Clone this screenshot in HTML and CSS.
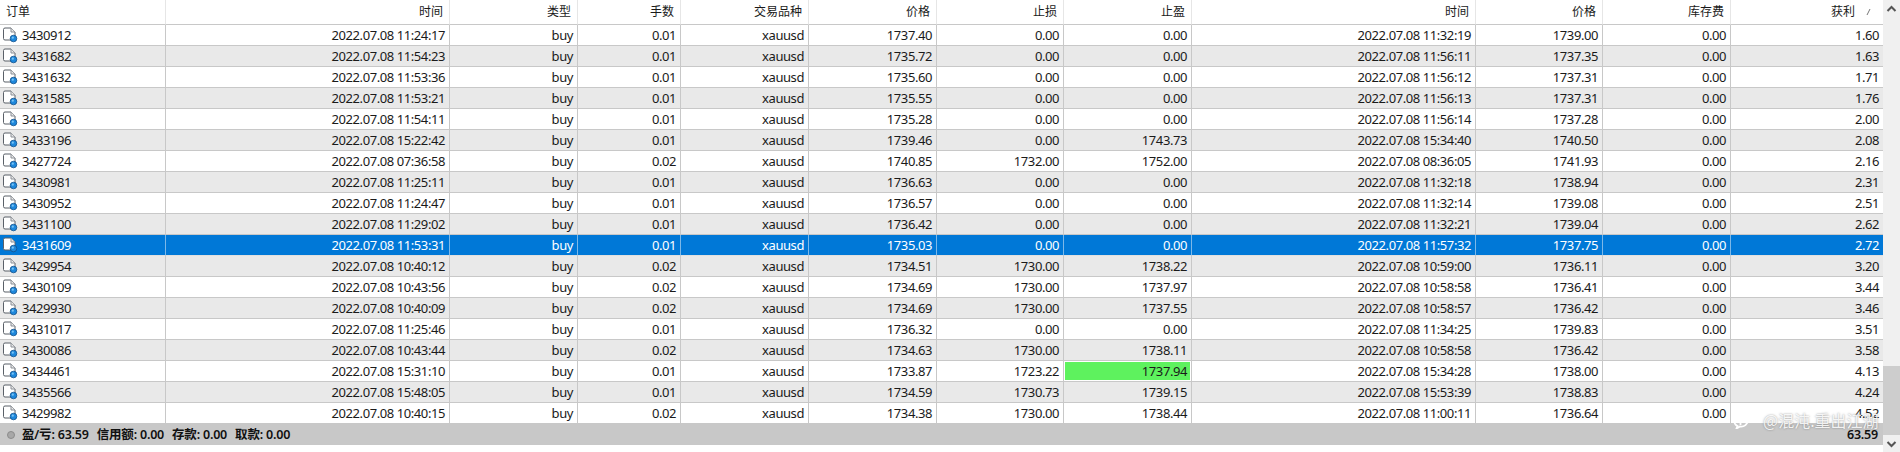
FILE: index.html
```html
<!DOCTYPE html>
<html lang="zh-CN">
<head>
<meta charset="utf-8">
<title>账户历史</title>
<link rel="stylesheet" href="styles.css">
</head>
<body>
<svg class="defs" width="0" height="0" aria-hidden="true">
  <symbol id="doc" viewBox="0 0 16 16">
    <path d="M.5 2.500q0-1.500 1.500-1.500H8l4 4v8H2q-1.500 0-1.500-1.500z" fill="#fff" stroke="#5a6068"/>
    <path d="M8 1v4h4" fill="#e8e8e8" stroke="#8a8f96"/>
    <circle cx="10.500" cy="11.500" r="3.300" fill="#1e88dc" stroke="#10508c" stroke-width=".8"/>
    <circle cx="9.800" cy="10.700" r="1.100" fill="#7cc4f4"/>
  </symbol>
</svg>
<div class="window">
  <div class="main">
    <table class="grid">
      <colgroup>
        <col class="w-order"><col class="w-time"><col class="w-type"><col class="w-vol"><col class="w-sym"><col class="w-num"><col class="w-num2"><col class="w-num"><col class="w-time"><col class="w-num2"><col class="w-num"><col class="w-profit">
      </colgroup>
      <thead>
        <tr><th class="left">订单</th><th>时间</th><th>类型</th><th>手数</th><th>交易品种</th><th>价格</th><th>止损</th><th>止盈</th><th>时间</th><th>价格</th><th>库存费</th><th class="sorted">获利<svg class="sort" width="8" height="8" viewBox="0 0 8 8"><path d="M2 7 5 1" stroke="#777" fill="none"/></svg></th></tr>
      </thead>
      <tbody>
        <tr><td><svg class="ico"><use href="#doc"/></svg>3430912</td><td>2022.07.08 11:24:17</td><td>buy</td><td>0.01</td><td>xauusd</td><td>1737.40</td><td>0.00</td><td>0.00</td><td>2022.07.08 11:32:19</td><td>1739.00</td><td>0.00</td><td>1.60</td></tr>
        <tr><td><svg class="ico"><use href="#doc"/></svg>3431682</td><td>2022.07.08 11:54:23</td><td>buy</td><td>0.01</td><td>xauusd</td><td>1735.72</td><td>0.00</td><td>0.00</td><td>2022.07.08 11:56:11</td><td>1737.35</td><td>0.00</td><td>1.63</td></tr>
        <tr><td><svg class="ico"><use href="#doc"/></svg>3431632</td><td>2022.07.08 11:53:36</td><td>buy</td><td>0.01</td><td>xauusd</td><td>1735.60</td><td>0.00</td><td>0.00</td><td>2022.07.08 11:56:12</td><td>1737.31</td><td>0.00</td><td>1.71</td></tr>
        <tr><td><svg class="ico"><use href="#doc"/></svg>3431585</td><td>2022.07.08 11:53:21</td><td>buy</td><td>0.01</td><td>xauusd</td><td>1735.55</td><td>0.00</td><td>0.00</td><td>2022.07.08 11:56:13</td><td>1737.31</td><td>0.00</td><td>1.76</td></tr>
        <tr><td><svg class="ico"><use href="#doc"/></svg>3431660</td><td>2022.07.08 11:54:11</td><td>buy</td><td>0.01</td><td>xauusd</td><td>1735.28</td><td>0.00</td><td>0.00</td><td>2022.07.08 11:56:14</td><td>1737.28</td><td>0.00</td><td>2.00</td></tr>
        <tr><td><svg class="ico"><use href="#doc"/></svg>3433196</td><td>2022.07.08 15:22:42</td><td>buy</td><td>0.01</td><td>xauusd</td><td>1739.46</td><td>0.00</td><td>1743.73</td><td>2022.07.08 15:34:40</td><td>1740.50</td><td>0.00</td><td>2.08</td></tr>
        <tr><td><svg class="ico"><use href="#doc"/></svg>3427724</td><td>2022.07.08 07:36:58</td><td>buy</td><td>0.02</td><td>xauusd</td><td>1740.85</td><td>1732.00</td><td>1752.00</td><td>2022.07.08 08:36:05</td><td>1741.93</td><td>0.00</td><td>2.16</td></tr>
        <tr><td><svg class="ico"><use href="#doc"/></svg>3430981</td><td>2022.07.08 11:25:11</td><td>buy</td><td>0.01</td><td>xauusd</td><td>1736.63</td><td>0.00</td><td>0.00</td><td>2022.07.08 11:32:18</td><td>1738.94</td><td>0.00</td><td>2.31</td></tr>
        <tr><td><svg class="ico"><use href="#doc"/></svg>3430952</td><td>2022.07.08 11:24:47</td><td>buy</td><td>0.01</td><td>xauusd</td><td>1736.57</td><td>0.00</td><td>0.00</td><td>2022.07.08 11:32:14</td><td>1739.08</td><td>0.00</td><td>2.51</td></tr>
        <tr><td><svg class="ico"><use href="#doc"/></svg>3431100</td><td>2022.07.08 11:29:02</td><td>buy</td><td>0.01</td><td>xauusd</td><td>1736.42</td><td>0.00</td><td>0.00</td><td>2022.07.08 11:32:21</td><td>1739.04</td><td>0.00</td><td>2.62</td></tr>
        <tr class="selected"><td><svg class="ico"><use href="#doc"/></svg>3431609</td><td>2022.07.08 11:53:31</td><td>buy</td><td>0.01</td><td>xauusd</td><td>1735.03</td><td>0.00</td><td>0.00</td><td>2022.07.08 11:57:32</td><td>1737.75</td><td>0.00</td><td>2.72</td></tr>
        <tr><td><svg class="ico"><use href="#doc"/></svg>3429954</td><td>2022.07.08 10:40:12</td><td>buy</td><td>0.02</td><td>xauusd</td><td>1734.51</td><td>1730.00</td><td>1738.22</td><td>2022.07.08 10:59:00</td><td>1736.11</td><td>0.00</td><td>3.20</td></tr>
        <tr><td><svg class="ico"><use href="#doc"/></svg>3430109</td><td>2022.07.08 10:43:56</td><td>buy</td><td>0.02</td><td>xauusd</td><td>1734.69</td><td>1730.00</td><td>1737.97</td><td>2022.07.08 10:58:58</td><td>1736.41</td><td>0.00</td><td>3.44</td></tr>
        <tr><td><svg class="ico"><use href="#doc"/></svg>3429930</td><td>2022.07.08 10:40:09</td><td>buy</td><td>0.02</td><td>xauusd</td><td>1734.69</td><td>1730.00</td><td>1737.55</td><td>2022.07.08 10:58:57</td><td>1736.42</td><td>0.00</td><td>3.46</td></tr>
        <tr><td><svg class="ico"><use href="#doc"/></svg>3431017</td><td>2022.07.08 11:25:46</td><td>buy</td><td>0.01</td><td>xauusd</td><td>1736.32</td><td>0.00</td><td>0.00</td><td>2022.07.08 11:34:25</td><td>1739.83</td><td>0.00</td><td>3.51</td></tr>
        <tr><td><svg class="ico"><use href="#doc"/></svg>3430086</td><td>2022.07.08 10:43:44</td><td>buy</td><td>0.02</td><td>xauusd</td><td>1734.63</td><td>1730.00</td><td>1738.11</td><td>2022.07.08 10:58:58</td><td>1736.42</td><td>0.00</td><td>3.58</td></tr>
        <tr><td><svg class="ico"><use href="#doc"/></svg>3434461</td><td>2022.07.08 15:31:10</td><td>buy</td><td>0.01</td><td>xauusd</td><td>1733.87</td><td>1723.22</td><td class="hit">1737.94</td><td>2022.07.08 15:34:28</td><td>1738.00</td><td>0.00</td><td>4.13</td></tr>
        <tr><td><svg class="ico"><use href="#doc"/></svg>3435566</td><td>2022.07.08 15:48:05</td><td>buy</td><td>0.01</td><td>xauusd</td><td>1734.59</td><td>1730.73</td><td>1739.15</td><td>2022.07.08 15:53:39</td><td>1738.83</td><td>0.00</td><td>4.24</td></tr>
        <tr><td><svg class="ico"><use href="#doc"/></svg>3429982</td><td>2022.07.08 10:40:15</td><td>buy</td><td>0.02</td><td>xauusd</td><td>1734.38</td><td>1730.00</td><td>1738.44</td><td>2022.07.08 11:00:11</td><td>1736.64</td><td>0.00</td><td>4.52</td></tr>
      </tbody>
    </table>
    <div class="summary">
      <span class="dot"></span>
      <span class="stats"><span>盈/亏: 63.59</span><span>信用额: 0.00</span><span>存款: 0.00</span><span>取款: 0.00</span></span>
      <span class="total">63.59</span>
    </div>
  </div>
  <div class="scrollbar">
    <svg class="chev" width="17" height="18" viewBox="0 0 17 18"><path d="M4.500 11 8.500 7l4 4" fill="none" stroke="#555" stroke-width="2"/></svg>
    <div class="track"><div class="thumb"></div></div>
    <svg class="chev" width="17" height="18" viewBox="0 0 17 18"><path d="M4.500 7l4 4 4-4" fill="none" stroke="#555" stroke-width="2"/></svg>
  </div>
  <div class="watermark">
    <svg width="18" height="18" viewBox="0 0 18 18"><path d="M12 2.500C7 1 2 4 2 9c0 3 1.500 5 3.500 6l-1 2.500 3.500-2c4 .5 8-2 8-6.500 0-2-.8-4-2.500-5.500M11 4.500C9 4 8.500 6 8.500 8v6M6 8.500h5" fill="none" stroke="#fff" stroke-width="1.800"/></svg>
    <span>@混沌.重出江湖</span>
  </div>
</div>
</body>
</html>
```
FILE: styles.css
```css
* { box-sizing: border-box; }
html, body { margin: 0; padding: 0; background: #fff; }
body {
  width: 1900px;
  height: 452px;
  overflow: hidden;
  font-family: "Noto Sans", "Open Sans", "Noto Sans CJK SC", sans-serif;
  font-size: 13px;
  color: #1a1a1a;
}
.defs { position: absolute; }
.window { position: relative; display: flex; height: 452px; }
.main { width: 1883px; display: flex; flex-direction: column; }

.grid {
  width: 1883px;
  table-layout: fixed;
  border-collapse: separate;
  border-spacing: 0;
}
.w-order { width: 166px; }
.w-time { width: 284px; }
.w-type { width: 128px; }
.w-vol { width: 103px; }
.w-sym { width: 128px; }
.w-num { width: 128px; }
.w-num2 { width: 127px; }
.w-profit { width: 152px; }

.grid th {
  height: 25px;
  padding: 0 6px 2px 0;
  font-size: 12px;
  line-height: 22px;
  font-weight: 400;
  text-align: right;
  border-right: 1px solid #e6e6e6;
  border-bottom: 1px solid #c8c8c8;
  font-family: "Noto Sans CJK SC", "Noto Sans", sans-serif;
}
.grid th.left { text-align: left; padding-left: 6px; }
.grid th.sorted { border-right: 0; padding-right: 10px; }
.sort { margin-left: 10px; }

.grid td {
  height: 21px;
  padding: 0 4px 0 0;
  text-align: right;
  white-space: nowrap;
  letter-spacing: -0.42px;
  line-height: 20px;
  border-right: 1px solid #c8c8c8;
  border-bottom: 1px solid #c8c8c8;
}
.grid td:first-child { text-align: left; padding-left: 3px; }
.grid td:last-child { border-right: 0; }
.grid tbody tr:nth-child(even) td { background: #e9e9e9; }
.grid tbody tr.selected td {
  background: #0078d7;
  color: #fff;
  border-right-color: #7db8e8;
  border-bottom-color: #e0e0e0;
}
.grid tbody tr td.hit { background: linear-gradient(#5ef25e, #5ef25e) 1px 1px / 125px 18px no-repeat; }

.ico { width: 16px; height: 16px; margin-right: 3px; vertical-align: -3px; }

.summary {
  display: flex;
  align-items: center;
  flex: none;
  height: 21px;
  background: #c8c8c8;
  padding: 0 5px 0 7px;
  font-size: 12.500px;
  line-height: 20px;
  font-weight: 600;
  color: #111;
  font-family: "Noto Sans", "Noto Sans CJK SC", sans-serif;
  letter-spacing: -0.2px;
}
.dot {
  width: 8px;
  height: 8px;
  margin-right: 7px;
  border-radius: 50%;
  background: #a8a8a8;
  border: 1px solid #8c8c8c;
}
.stats { display: flex; gap: 8px; }
.total { margin-left: auto; }

.scrollbar {
  width: 17px;
  display: flex;
  flex-direction: column;
  background: #f0f0f0;
}
.chev { flex: none; display: block; }
.track { flex: 1; padding-top: 348px; }
.thumb { height: 69px; background: #cdcdcd; }

.watermark {
  position: absolute;
  left: 1732px;
  top: 411px;
  display: flex;
  align-items: center;
  gap: 13px;
  color: rgba(255, 255, 255, .88);
  font-size: 16px;
  line-height: 18px;
  font-family: "Noto Sans CJK SC", sans-serif;
  text-shadow: 0 0 2px rgba(90, 90, 90, .7);
}
```
